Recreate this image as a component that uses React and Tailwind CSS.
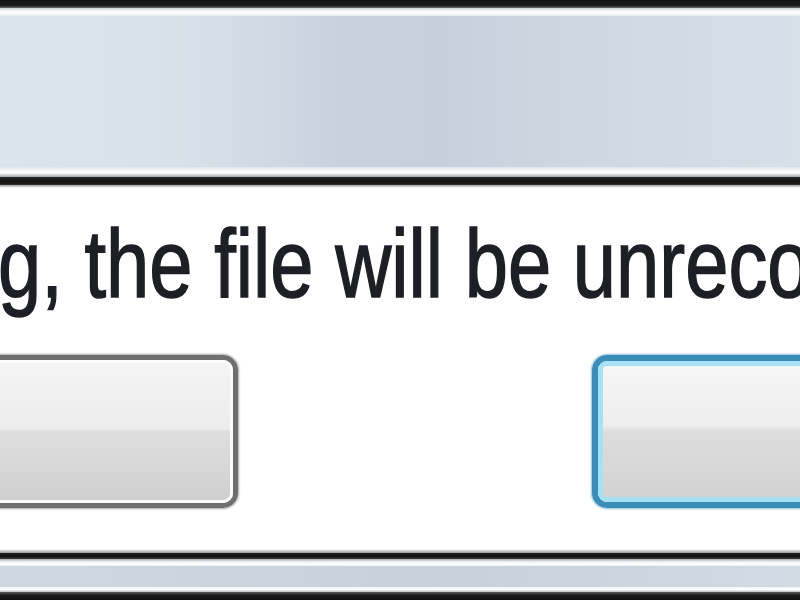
export default function App() {
  return (
    <div className="w-[800px] h-[600px] overflow-hidden flex flex-col bg-white">
      {/* top frame */}
      <div className="h-[8px] shrink-0 bg-[linear-gradient(to_bottom,#121212_0%,#1c1c1c_70%,#6a6e72_100%)]" />
      <div className="h-[8px] shrink-0 bg-[linear-gradient(to_bottom,#c9d0d6_0%,#f4f7f9_35%,#ffffff_60%,#e2e9ef_100%)]" />
      <div className="h-[151px] shrink-0 bg-[linear-gradient(to_right,#dce4eb_0%,#d7e1e8_22%,#cfdbe4_32%,#c6d3df_42%,#c4d1dd_55%,#cbd6e0_68%,#d2dbe4_85%,#d7dfe7_100%)]" />
      <div className="h-[10px] shrink-0 bg-[linear-gradient(to_bottom,#dfe6ec_0%,#f7f9fb_40%,#ffffff_60%,#9ea4a9_100%)]" />
      <div className="h-[8px] shrink-0 bg-[linear-gradient(to_bottom,#2a2c2e_0%,#141414_40%,#1a1a1a_80%,#3a3a3a_100%)]" />
      <div className="h-[3px] shrink-0 bg-[linear-gradient(to_bottom,#9a9a9a,#ffffff)]" />

      {/* body */}
      <div className="flex-1 flex flex-col overflow-hidden bg-white pt-[28px]">
        <div
          className="whitespace-nowrap text-[96px] leading-[96px] text-[#1d1f24] origin-left scale-x-[0.81] ml-[-2px] blur-[0.6px] [-webkit-text-stroke:1.5px_#1d1f24]"
          style={{ fontFamily: '"Liberation Sans", Arial, sans-serif' }}
        >
          g, the file will be unrecoverable.
        </div>
        <div className="mt-[43px] flex justify-between">
          <div className="ml-[-30px] w-[268px] h-[153px] rounded-[15px] border-[5px] border-[#6f6f6f] shadow-[0_0_2px_1px_rgba(110,110,110,0.6)] blur-[0.5px]">
            <div className="h-full w-full rounded-[10px] border-[3px] border-[#fbfbfb] bg-[linear-gradient(to_bottom,#f4f4f4_0%,#ececec_48%,#dedede_50%,#d4d4d4_85%,#cfcfcf_100%)]" />
          </div>
          <div className="mr-[-60px] w-[268px] h-[153px] rounded-[15px] border-[6px] border-[#3b8cb6] shadow-[0_0_2px_1px_rgba(70,150,190,0.6)] blur-[0.5px]">
            <div className="h-full w-full rounded-[9px] border-[5px] border-[#a6e0f3] bg-[linear-gradient(to_bottom,#f5f5f5_0%,#eeeeee_45%,#dcdcdc_50%,#d6d6d6_85%,#d2d2d2_100%)]" />
          </div>
        </div>
      </div>

      {/* bottom frame */}
      <div className="h-[4px] shrink-0 bg-[linear-gradient(to_bottom,#ffffff,#9a9a9a)]" />
      <div className="h-[6px] shrink-0 bg-[linear-gradient(to_bottom,#1e1e1e_0%,#141414_60%,#3c3e40_100%)]" />
      <div className="h-[7px] shrink-0 bg-[linear-gradient(to_bottom,#a7acb0_0%,#eef2f5_40%,#ffffff_70%,#eaeff3_100%)]" />
      <div className="h-[21px] shrink-0 bg-[linear-gradient(to_right,#cfd8e0_0%,#c9d3dd_40%,#c6d1dc_55%,#cdd6df_80%,#d2dae2_100%)]" />
      <div className="h-[5px] shrink-0 bg-[linear-gradient(to_bottom,#eef2f5_0%,#ffffff_50%,#b8bcc0_100%)]" />
      <div className="h-[8px] shrink-0 bg-[linear-gradient(to_bottom,#5a5c5e_0%,#1a1a1a_40%,#111111_100%)]" />
    </div>
  );
}
